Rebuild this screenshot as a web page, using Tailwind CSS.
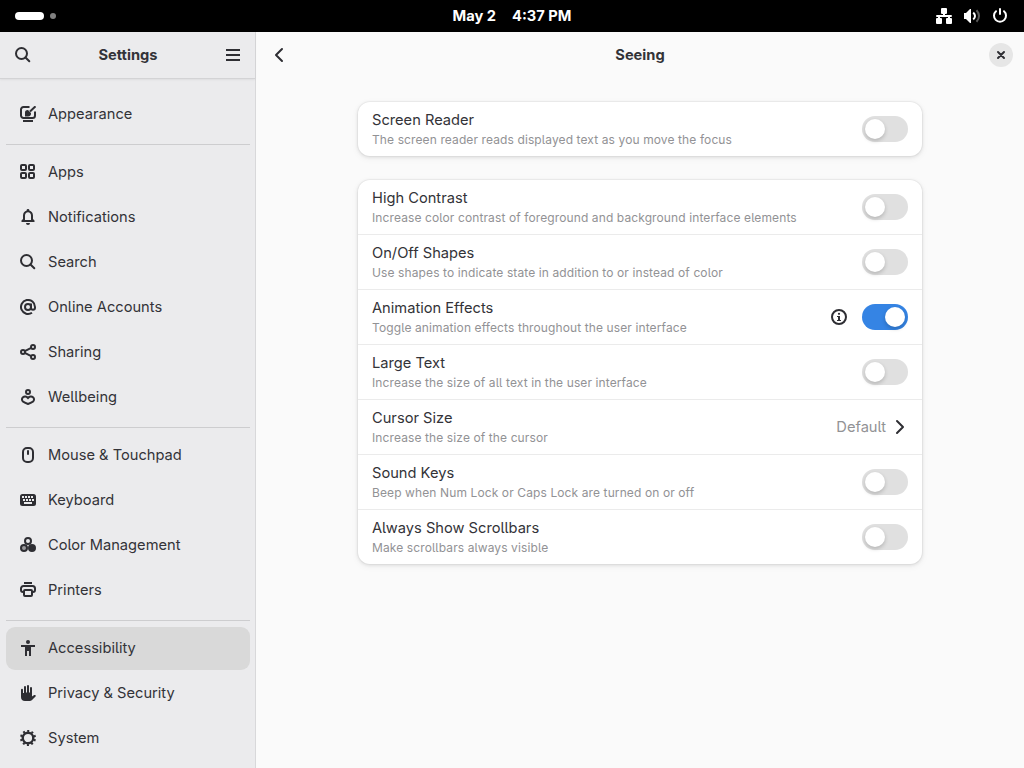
<!DOCTYPE html>
<html lang="en">
<head>
<meta charset="utf-8">
<title>Settings</title>
<script src="https://cdn.jsdelivr.net/npm/@tailwindcss/browser@4"></script>
</head>
<body class="w-[1024px] h-[768px] overflow-hidden flex flex-col bg-[#fafafa] text-[#333338] text-[14.667px] leading-5 font-['Inter','Noto_Sans',sans-serif] [font-feature-settings:'cv05']">

<header class="h-8 shrink-0 bg-black text-white grid grid-cols-3 items-center">
  <div class="flex items-center gap-1.5 pl-[15px]">
    <span class="w-[29px] h-2 rounded-full bg-white"></span>
    <span class="size-1.5 rounded-full bg-[#808080]"></span>
  </div>
  <div class="flex justify-center gap-4 font-bold whitespace-nowrap"><span>May 2</span><span>4:37 PM</span></div>
  <div class="flex justify-end items-center gap-3 pr-4">
    <svg class="size-4" viewBox="0 0 16 16" fill="#fff"><rect x="5" width="6" height="6" rx="1"/><rect y="10" width="6" height="6" rx="1"/><rect x="10" y="10" width="6" height="6" rx="1"/><path d="M7 5h2v2h6a1 1 0 0 1 0 2H1a1 1 0 0 1 0-2h6z"/><path d="M2 8h2v3H2zM12 8h2v3h-2z"/></svg>
    <svg class="size-4" viewBox="0 0 16 16" fill="none"><path d="M0 5h2l4-4h1v14H6l-4-4H0z" fill="#fff"/><path d="M9.2 4.6Q11 6 11 8T9.200 11.400" stroke="#fff" stroke-width="2"/><path d="M12.500 2.300Q15 5 15 8t-2.500 5.700" stroke="#595959" stroke-width="2"/></svg>
    <svg class="size-4" viewBox="0 0 16 16" fill="none" stroke="#fff" stroke-width="2" stroke-linecap="round"><path d="M4 3.200a6 6 0 1 0 8 0M8 1v5"/></svg>
  </div>
</header>

<div class="flex flex-1 min-h-0">
  <aside class="w-64 shrink-0 bg-[#ebebed] border-r border-[#d8d8da] flex flex-col">
    <div class="h-[47px] shrink-0 border-b border-[#d3d3d5] shadow-[0_1px_2px_rgba(0,0,0,0.06)] flex items-center justify-between pl-[15px] pr-[14px]">
      <svg class="size-4" viewBox="0 0 16 16" fill="none" stroke="#2e2e33" stroke-width="2"><circle cx="6.500" cy="6.500" r="5.500"/><path d="M10.500 10.500l3.800 3.800" stroke-linecap="round"/></svg>
      <h1 class="font-bold">Settings</h1>
      <svg class="size-4" viewBox="0 0 16 16" fill="#2e2e33"><path d="M1 2h14v2H1zM1 7h14v2H1zM1 12h14v2H1z"/></svg>
    </div>
    <nav class="flex flex-col px-1.5 pr-[5px] pt-[14px] gap-0.5">
      <div class="h-[43px] px-3.5 pb-px flex items-center gap-3"><svg class="size-4" viewBox="0 0 16 16" fill="none" stroke="#2e2e33" stroke-width="2"><path d="M9.500 1H3.500A2.500 2.500 0 0 0 1 3.500v6A2.500 2.500 0 0 0 3.500 12h9a2.500 2.500 0 0 0 2.500-2.500V5.500"/><path d="M3 15h10"/><path d="M5 10.500V7.300A3 3 0 0 1 8 4l3 3a3.200 3.200 0 0 1-3 3.500z" fill="#2e2e33" stroke="none"/><path d="M10 5.500L15.500.300"/></svg><span>Appearance</span></div>
      <hr class="border-0 h-px bg-[#cdcdcf] mt-1.5 mb-1">
      <div class="h-[43px] px-3.5 pb-px flex items-center gap-3"><svg class="size-4" viewBox="0 0 16 16" fill="none" stroke="#2e2e33" stroke-width="2"><rect x="1" y="1" width="5" height="5" rx="1"/><rect x="9" y="1" width="5" height="5" rx="1"/><rect x="1" y="9" width="5" height="5" rx="1"/><rect x="9" y="9" width="5" height="5" rx="1"/></svg><span>Apps</span></div>
      <div class="h-[43px] px-3.5 pb-px flex items-center gap-3"><svg class="size-4" viewBox="0 0 16 16" fill="#2e2e33"><path d="M8 0a1.300 1.300 0 0 1 1.300 1.500C11.500 2 13 4 13 6.500V10l1.500 1.500V13h-13v-1.500L3 10V6.500C3 4 4.500 2 6.700 1.500A1.300 1.300 0 0 1 8 0zM8 3.200C6.200 3.200 5 4.600 5 6.500V11h6V6.500C11 4.600 9.800 3.200 8 3.200z" fill-rule="evenodd"/><path d="M6 14h4a2 2 0 0 1-4 0z"/></svg><span>Notifications</span></div>
      <div class="h-[43px] px-3.5 pb-px flex items-center gap-3"><svg class="size-4" viewBox="0 0 16 16" fill="none" stroke="#2e2e33" stroke-width="2"><circle cx="6.500" cy="6.500" r="5.500"/><path d="M10.500 10.500l3.800 3.800" stroke-linecap="round"/></svg><span>Search</span></div>
      <div class="h-[43px] px-3.5 pb-px flex items-center gap-3"><svg class="size-4" viewBox="0 0 16 16" fill="none" stroke="#2e2e33" stroke-width="2"><path d="M12 13.700A7 7 0 1 1 15 8v.8a2 2 0 0 1-4 0V4.500"/><circle cx="8" cy="8" r="3"/></svg><span>Online Accounts</span></div>
      <div class="h-[43px] px-3.5 pb-px flex items-center gap-3"><svg class="size-4" viewBox="0 0 16 16" fill="none" stroke="#2e2e33" stroke-width="2"><circle cx="3" cy="8" r="2"/><circle cx="13" cy="3" r="2"/><circle cx="13" cy="13" r="2"/><path d="M4.800 7.100L11.200 3.900M4.800 8.900l6.400 3.200"/></svg><span>Sharing</span></div>
      <div class="h-[43px] px-3.5 pb-px flex items-center gap-3"><svg class="size-4" viewBox="0 0 16 16" fill="none" stroke="#2e2e33" stroke-width="2"><circle cx="8" cy="3" r="2"/><path d="M8 9C6.500 7.300 4.300 7.100 3 8.200 1.600 9.400 1.600 11.200 2.900 12.500 4.300 13.700 6 14.300 8 15c2-.7 3.700-1.300 5.100-2.500 1.300-1.300 1.300-3.100-.1-4.300C11.700 7.100 9.500 7.300 8 9z"/></svg><span>Wellbeing</span></div>
      <hr class="border-0 h-px bg-[#cdcdcf] mt-1.5 mb-1">
      <div class="h-[43px] px-3.5 pb-px flex items-center gap-3"><svg class="size-4" viewBox="0 0 16 16" fill="none" stroke="#2e2e33" stroke-width="2"><rect x="3" y="1" width="10" height="14" rx="4"/><path d="M8 4v3" stroke-linecap="round"/></svg><span>Mouse &amp; Touchpad</span></div>
      <div class="h-[43px] px-3.5 pb-px flex items-center gap-3"><svg class="size-4" viewBox="0 0 16 16"><rect y="2" width="16" height="12" rx="2.500" fill="#2e2e33"/><path d="M2 4h2v2H2zM5 4h2v2H5zM8 4h2v2H8zM11 4h2v2h-2zM3 7h2v2H3zM6 7h2v2H6zM9 7h2v2H9zM12 7h2v2h-2zM4 10h8v2H4z" fill="#ebebed"/></svg><span>Keyboard</span></div>
      <div class="h-[43px] px-3.5 pb-px flex items-center gap-3"><svg class="size-4" viewBox="0 0 16 16" fill="none" stroke="#2e2e33" stroke-width="2"><circle cx="8" cy="4" r="3"/><circle cx="4" cy="11" r="3" fill="#9a9a9d"/><circle cx="12" cy="11" r="3" fill="#2e2e33"/></svg><span>Color Management</span></div>
      <div class="h-[43px] px-3.5 pb-px flex items-center gap-3"><svg class="size-4" viewBox="0 0 16 16" fill="none" stroke="#2e2e33" stroke-width="2"><path d="M4 1h8"/><path d="M4 10H3a2 2 0 0 1-2-2V6.500A2.500 2.500 0 0 1 3.500 4h9A2.500 2.500 0 0 1 15 6.500V8a2 2 0 0 1-2 2h-1"/><rect x="4" y="8" width="8" height="6" rx="1"/></svg><span>Printers</span></div>
      <hr class="border-0 h-px bg-[#cdcdcf] mt-1.5 mb-1">
      <div class="h-[43px] px-3.5 pb-px flex items-center gap-3 rounded-[9px] bg-[#d9d9d9]"><svg class="size-4" viewBox="0 0 16 16" fill="#2e2e33"><circle cx="8" cy="2" r="2"/><path d="M1 5h14v2h-4v9H9v-5H7v5H5V7H1z"/></svg><span>Accessibility</span></div>
      <div class="h-[43px] px-3.5 pb-px flex items-center gap-3"><svg class="size-4" viewBox="0 0 16 16" fill="#2e2e33"><path d="M1 4.800a1 1 0 0 1 2 0V8h1V2a1 1 0 0 1 2 0v5.500h1V1a1 1 0 0 1 2 0v6.500h1V3a1 1 0 0 1 2 0v8.500l2.200-1.400c1.100-.4 2.100.8 1.300 1.500L12 15c-.8.700-1.500 1-3 1H5c-2.500 0-4-1.500-4-4z"/></svg><span>Privacy &amp; Security</span></div>
      <div class="h-[43px] px-3.5 pb-px flex items-center gap-3"><svg class="size-4" viewBox="0 0 16 16" fill="none" stroke="#2e2e33"><circle cx="8" cy="8" r="5.300" stroke-width="2.400"/><circle cx="8" cy="8" r="7" stroke-width="2" stroke-dasharray="2 2.398" stroke-dashoffset="-1.199"/></svg><span>System</span></div>
    </nav>
  </aside>

  <main class="flex-1 flex flex-col items-center">
    <div class="h-[46px] w-full shrink-0 flex items-center justify-between pl-[15px] pr-[11px]">
      <svg class="size-4" viewBox="0 0 16 16" fill="none" stroke="#2e2e33" stroke-width="2" stroke-linecap="round" stroke-linejoin="round"><path d="M11 2L5 8l6 6"/></svg>
      <h2 class="font-bold pl-1">Seeing</h2>
      <button class="size-6 rounded-full bg-[#e6e6e6] flex items-center justify-center"><svg class="size-4" viewBox="0 0 16 16" fill="none" stroke="#2e2e33" stroke-width="2" stroke-linecap="round"><path d="M5 5l6 6M11 5l-6 6"/></svg></button>
    </div>

    <div class="w-[564px] mt-6 flex flex-col gap-6">
      <section class="bg-white rounded-xl shadow-[0_0_0_1px_rgba(0,0,0,0.03),0_1px_3px_1px_rgba(0,0,0,0.07),0_2px_6px_2px_rgba(0,0,0,0.03)]">
        <div class="h-[54px] px-3.5 flex items-center"><div class="flex-1 pt-0.5"><div>Screen Reader</div><div class="text-[12px] tracking-[0.11px] text-[#929295]">The screen reader reads displayed text as you move the focus</div></div><span class="w-[46px] h-[26px] p-[3px] rounded-full bg-[#e0e0e0] flex"><span class="size-5 rounded-full bg-white shadow-[0_2px_4px_rgba(0,0,0,0.2)]"></span></span></div>
      </section>
      <section class="bg-white rounded-xl divide-y divide-[#ebebeb] shadow-[0_0_0_1px_rgba(0,0,0,0.03),0_1px_3px_1px_rgba(0,0,0,0.07),0_2px_6px_2px_rgba(0,0,0,0.03)]">
        <div class="h-[55px] last:h-[54px] px-3.5 flex items-center"><div class="flex-1 pt-0.5"><div>High Contrast</div><div class="text-[12px] tracking-[0.11px] text-[#929295]">Increase color contrast of foreground and background interface elements</div></div><span class="w-[46px] h-[26px] p-[3px] rounded-full bg-[#e0e0e0] flex"><span class="size-5 rounded-full bg-white shadow-[0_2px_4px_rgba(0,0,0,0.2)]"></span></span></div>
        <div class="h-[55px] last:h-[54px] px-3.5 flex items-center"><div class="flex-1 pt-0.5"><div>On/Off Shapes</div><div class="text-[12px] tracking-[0.11px] text-[#929295]">Use shapes to indicate state in addition to or instead of color</div></div><span class="w-[46px] h-[26px] p-[3px] rounded-full bg-[#e0e0e0] flex"><span class="size-5 rounded-full bg-white shadow-[0_2px_4px_rgba(0,0,0,0.2)]"></span></span></div>
        <div class="h-[55px] last:h-[54px] px-3.5 flex items-center"><div class="flex-1 pt-0.5"><div>Animation Effects</div><div class="text-[12px] tracking-[0.11px] text-[#929295]">Toggle animation effects throughout the user interface</div></div><svg class="size-4 mr-[15px]" viewBox="0 0 16 16" fill="#2e2e33"><circle cx="8" cy="8" r="7" fill="none" stroke="#2e2e33" stroke-width="2"/><circle cx="8" cy="4.800" r="1.100"/><path d="M6 7h3v4h1v1H6v-1h1V8H6z"/></svg><span class="w-[46px] h-[26px] p-[3px] rounded-full bg-[#3584e4] flex justify-end"><span class="size-5 rounded-full bg-white shadow-[0_2px_4px_rgba(0,0,0,0.2)]"></span></span></div>
        <div class="h-[55px] last:h-[54px] px-3.5 flex items-center"><div class="flex-1 pt-0.5"><div>Large Text</div><div class="text-[12px] tracking-[0.11px] text-[#929295]">Increase the size of all text in the user interface</div></div><span class="w-[46px] h-[26px] p-[3px] rounded-full bg-[#e0e0e0] flex"><span class="size-5 rounded-full bg-white shadow-[0_2px_4px_rgba(0,0,0,0.2)]"></span></span></div>
        <div class="h-[55px] last:h-[54px] px-3.5 flex items-center"><div class="flex-1 pt-0.5"><div>Cursor Size</div><div class="text-[12px] tracking-[0.11px] text-[#929295]">Increase the size of the cursor</div></div><span class="text-[#929295] mr-1.5">Default</span><svg class="size-4" viewBox="0 0 16 16" fill="none" stroke="#2e2e33" stroke-width="2" stroke-linecap="round" stroke-linejoin="round"><path d="M5 2l6 6-6 6"/></svg></div>
        <div class="h-[55px] last:h-[54px] px-3.5 flex items-center"><div class="flex-1 pt-0.5"><div>Sound Keys</div><div class="text-[12px] tracking-[0.11px] text-[#929295]">Beep when Num Lock or Caps Lock are turned on or off</div></div><span class="w-[46px] h-[26px] p-[3px] rounded-full bg-[#e0e0e0] flex"><span class="size-5 rounded-full bg-white shadow-[0_2px_4px_rgba(0,0,0,0.2)]"></span></span></div>
        <div class="h-[55px] last:h-[54px] px-3.5 flex items-center"><div class="flex-1 pt-0.5"><div>Always Show Scrollbars</div><div class="text-[12px] tracking-[0.11px] text-[#929295]">Make scrollbars always visible</div></div><span class="w-[46px] h-[26px] p-[3px] rounded-full bg-[#e0e0e0] flex"><span class="size-5 rounded-full bg-white shadow-[0_2px_4px_rgba(0,0,0,0.2)]"></span></span></div>
      </section>
    </div>
  </main>
</div>
</body>
</html>
